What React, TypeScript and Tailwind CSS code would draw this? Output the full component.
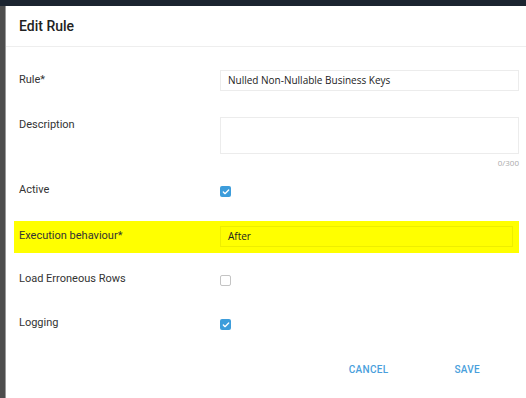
import { Check } from "lucide-react";

function Box({ checked }: { checked: boolean }) {
  return checked ? (
    <span className="flex h-[11px] w-[11px] items-center justify-center rounded-[2px] bg-[#3d9ddb]">
      <Check className="h-[8px] w-[8px] text-white" strokeWidth={4} />
    </span>
  ) : (
    <span className="block h-[11px] w-[11px] rounded-[2px] border border-[#c4c4c4] bg-white" />
  );
}

function Row({ label, children, className = "" }: { label: string; children: React.ReactNode; className?: string }) {
  return (
    <div className={`flex ${className}`}>
      <div className="w-[206px] shrink-0 pl-[5px] text-[11px] text-[#333]">{label}</div>
      <div className="flex-1">{children}</div>
    </div>
  );
}

export default function App() {
  return (
    <div className="flex h-[398px] w-[526px] flex-col overflow-hidden bg-[#1b2430] font-['Roboto',sans-serif]">
      <div className="h-[6px] shrink-0" />
      <div className="flex flex-1">
        <div className="w-[5px] bg-[#4d4d4d]" />
        <div className="w-[1px] bg-[#9a9a9a]" />
        <div className="flex flex-1 flex-col bg-white">
          <div className="flex h-[41px] items-center border-b border-[#eeeeee] pl-[13px] pt-[1px] text-[14px] font-medium text-[#222]">
            Edit Rule
          </div>
          <div className="flex flex-col px-[8px] pr-[7px]">
            <Row label="Rule*" className="mt-[23px] items-center">
              <div className="flex h-[21px] items-center border border-[#ececec] pl-[7px] font-['Open_Sans',sans-serif] text-[10px] text-[#222]">
                Nulled Non-Nullable Business Keys
              </div>
            </Row>
            <Row label="Description" className="mt-[26px] items-start">
              <div>
                <div className="h-[37px] border border-[#ececec]" />
                <div className="mt-[3px] text-right font-['Open_Sans',sans-serif] text-[8px] text-[#aaa]">0/300</div>
              </div>
            </Row>
            <Row label="Active" className="mt-[13px] items-center">
              <div className="mt-[3px]">
                <Box checked />
              </div>
            </Row>
            <Row label="Execution behaviour*" className="mt-[22px] h-[32px] items-center bg-[#ffff00]">
              <div className="mr-[6px] flex h-[21px] items-center border border-[#eeee00] pl-[7px] font-['Open_Sans',sans-serif] text-[10px] text-[#222]">
                After
              </div>
            </Row>
            <Row label="Load Erroneous Rows" className="mt-[18px] items-start">
              <div className="mt-[4px]">
                <Box checked={false} />
              </div>
            </Row>
            <Row label="Logging" className="mt-[28px] items-start">
              <div className="mt-[4px]">
                <Box checked />
              </div>
            </Row>
            <div className="mt-[30px] flex justify-end gap-[66px] pr-[39px] text-[10px] font-medium tracking-[0.3px] text-[#4a9fdc]">
              <span>CANCEL</span>
              <span>SAVE</span>
            </div>
          </div>
        </div>
      </div>
    </div>
  );
}
